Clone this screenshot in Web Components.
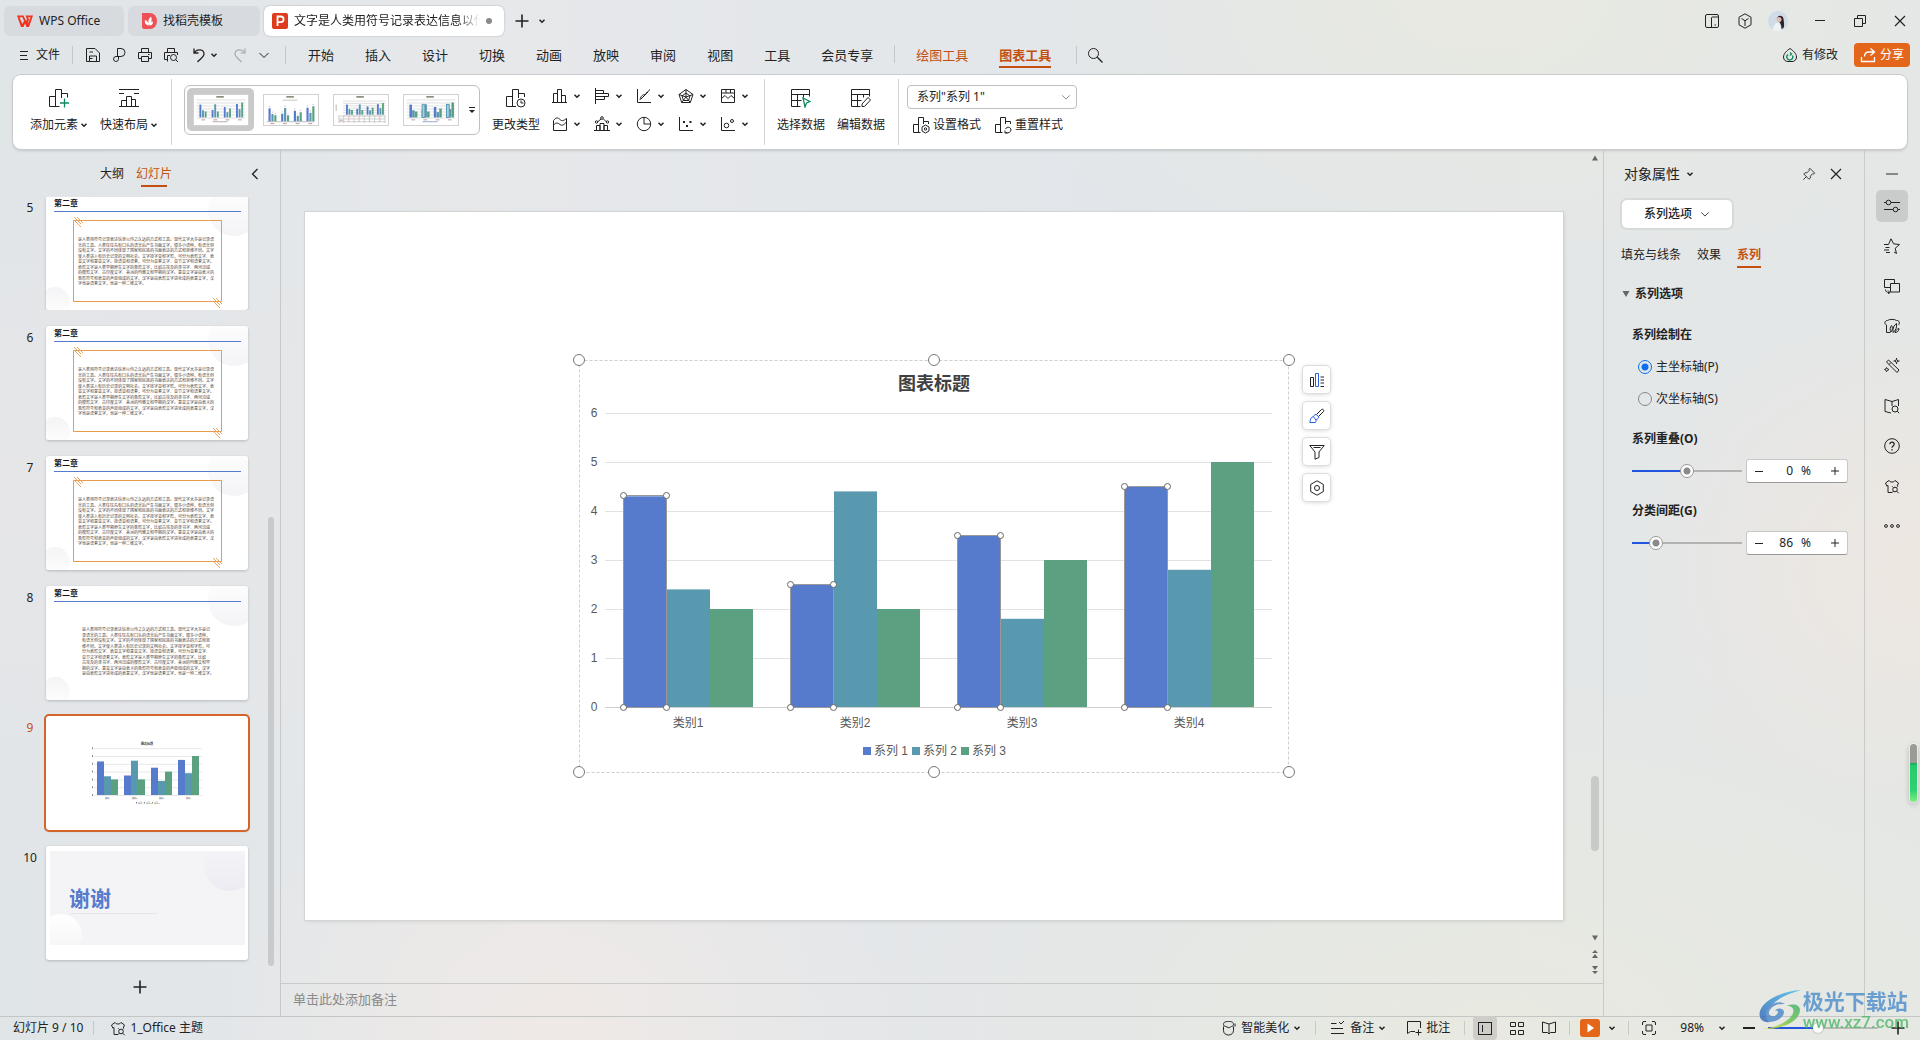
<!DOCTYPE html>
<html lang="zh-CN">
<head>
<meta charset="utf-8">
<title>WPS Office</title>
<style>
html,body{margin:0;height:100%}
body{font:12px/16px "Noto Sans","Noto Sans CJK SC",sans-serif;color:#222;overflow:hidden}
</style>
</head>
<body>
<wps-app></wps-app>
<script>
const BASE = `*{box-sizing:border-box}
button,input,select{font:inherit;color:inherit;margin:0}
button{background:none;border:0;padding:0;display:flex;align-items:center;cursor:pointer;white-space:nowrap}
a{color:inherit;text-decoration:none;white-space:nowrap}
svg{display:block}`;

const define = (tag, css, render) => customElements.define(tag, class extends HTMLElement {
  connectedCallback() {
    if (this.shadowRoot) return;
    this.attachShadow({ mode: 'open' }).innerHTML = `<style>${BASE}${css}</style>${render(this)}`;
  }
});

const BARS20 = 'M.5 18.5v-10h6M.5 18.5h6.5M6.5 18.5V1.5h6V10';
const SHIRT = 'M5 2.5 1.5 5l1.3 3L4 7.500V14.500h4M5 2.500c1 2 5 2 6 0l3.500 2.500-1.300 3';
/* name: [view box side, markup] */
const ICONS = {
  caret: [8, '<path d="M1.500 2.800 4 5.200 6.500 2.800" stroke-width="1.500"/>'],
  chevron: [12, '<path d="M1.500 4 6 8.500 10.500 4"/>'],
  back: [12, '<path d="M8.500 1 3.500 6l5 5" stroke-width="1.300"/>'],
  plus: [14, '<path d="M7 .5v13M.5 7h13" stroke-width="1.600"/>'],
  plusS: [10, '<path d="M5 1v8M1 5h8"/>'],
  minus: [12, '<path d="M0 6h12" stroke-width="2"/>'],
  minusS: [10, '<path d="M1 5.500h8"/>'],
  close: [12, '<path d="m1 1 10 10M11 1 1 11" stroke-width="1.200"/>'],
  menu: [10, '<path d="M1 1.500h8M1 5.500h7M1 9.500h8"/>'],
  save: [16, '<path d="M1.500 1.500h8.500l4.500 4.500v8.500h-13zM4.500 14.500V9h7v5.500M4.500 5H8M4.500 11.500h3"/>'],
  export: [16, '<path d="M6.500 9.500V1.500h3.500a4 4 0 0 1 0 8H5a2.500 2.500 0 1 0 2.500 3V9.500" /><path d="M6.500 4v5.500"/>'],
  print: [16, '<path d="M4.500 5V1.500h7V5M4 11.500H1.500v-6h13v6H12M4.500 9.500h7v5h-7zM11 7.500h1.500"/>'],
  preview: [16, '<path d="M4.500 5V1.500h7V5M4 12.500H1.500v-7h13V8M4.500 14.500v-6H7"/><circle cx="10.500" cy="10.500" r="3"/><path d="m12.800 12.800 2.200 2.200"/>'],
  undo: [16, '<path d="M3 1.500v4.500h4.500M3.500 5.500C6 1.500 13 2 13 7c0 3-4 5-6.500 8" stroke-width="1.300"/>'],
  redo: [16, '<path d="M13 1.500v4.500H8.500M12.500 5.500C10 1.500 3 2 3 7c0 3 4 5 6.500 8" stroke-width="1.200"/>'],
  search: [16, '<circle cx="6.500" cy="6.500" r="5"/><path d="m10.300 10.300 5.200 5.200" stroke-width="1.300"/>'],
  panels: [16, '<rect x="1.500" y="1.500" width="13" height="13" rx="1.500"/><path d="M7.500 14.500V5a1 1 0 0 1 1-1h6M10.500 12h1.500" />'],
  cube: [16, '<path d="M8 .8 14 4.200v7.600L8 15.200 2 11.800V4.200zM4.500 5.500 8 7.700l3.500-2.200M8 7.700V13"/>'],
  restore: [12, '<path d="M3.500 3.500V.5h8v8h-3M.5 3.500h8v8h-8z"/>'],
  min: [12, '<path d="M1 5.500h10"/>'],
  cloud: [16, '<path d="M8 1.500c3 2 6.500 5 6.500 8.500 0 3-2 4.500-4.500 4.500H6C3.500 14.500 1.500 13 1.500 10 1.500 6.500 5 3.500 8 1.500z"/><path d="M6 7.500a3 3 0 1 0 4.500 1M8 5.500l1.500 1.500L8 8.500" stroke="#0f8a60" stroke-width="1.300"/>'],
  share: [16, '<path d="M10.500 1.500 14.500 5l-4 3.500M14 5H9C6 5 4.500 7 4.500 9.500M1.500 10v4.500h13V10" stroke-width="1.300"/>'],
  addel: [20, `<path d="${BARS20}M12.500 5.500h6v4M6.500 18.500h4"/><path d="M15.500 10.500v9M11 15h9" stroke="#0f8a60" stroke-width="1.300"/>`],
  layout: [20, '<path d="M0 1.500h20M0 5.500h5M15 5.500h5M2.500 18.500v-6h5M7.500 18.500V8.500h5v10M12.500 11.500h4v7M0 18.500h20"/>'],
  chtype: [20, `<path d="${BARS20}M12.500 5.500h6V9M6.500 18.500H10"/><circle cx="15" cy="15" r="4"/><path d="M15 12.500V15h2.500"/>`],
  bars: [16, '<path d="M1.500 14.500v-9h4v9zM5.500 14.500v-13h4v13zM9.500 14.500v-7h4v7zM0 14.500h15"/>'],
  hbars: [16, '<path d="M1.500 0v16M1.500 2.500h8v3M1.500 5.500h13v3h-13M1.500 8.500h9v3h-9"/>'],
  line: [16, '<path d="M1.500 1v13.500H15M4 12c1-5 3-5 4.500-5.500S11 4 14 1.500M5 11l7-7"/>'],
  radar: [16, '<path d="m8 1.500 7 5-2.700 8H3.700L1 6.500zM8 1.500V9M1 6.500 8 9l7-2.500M3.700 14.500 8 9l4.300 5.500M8 5l4 3-1.500 4.500h-5L4 8z"/>'],
  treemap: [16, '<path d="M1.500 1.500h13v13h-13zM1.500 5h13M6 1.500V5M10.500 1.500V5M1.500 10.500 5 7.500l3 3 3-3 3.500 3"/>'],
  area: [16, '<path d="M1.500 14.500V4.500C4 1 6 1.500 8 3.500s4 1 6.500-1v12zM1.500 9C4 6 6 7 8 8.500S12 9 14.500 6"/>'],
  combo: [16, '<path d="M2.500 14.500v-5h3.500v5M6 14.500v-7h4v7M10 14.500v-5h3.500v5M0 14.500h16M3.500 6 7 3M9.500 3l3 3"/><circle cx="2.500" cy="6" r="1.200"/><circle cx="8" cy="2" r="1.300"/><circle cx="13.500" cy="6" r="1.200"/>'],
  pie: [16, '<circle cx="8" cy="8" r="6.700"/><path d="M8 1.500V8h6.500"/>'],
  scatter: [16, '<path d="M1.500 1v13.500H15"/><path d="M5 5h2v2H5zM8 9h2v2H8zM11.500 5h2v2h-2z" fill="currentColor" stroke="none"/>'],
  bubble: [16, '<path d="M1.500 1v13.500H15"/><circle cx="6.500" cy="9.500" r="2.300"/><circle cx="12" cy="5" r="1.500"/>'],
  seldata: [20, '<path d="M.5 1.500h18v7M.5 1.500v17h9M.5 6.500h18M.5 12.500h10M6.500 6.500v12M12.500 6.500v3"/><path d="m12 10 7 3.500-3.500 1.500-1.500 4z" stroke="#0f8a60" stroke-width="1.300"/>'],
  editdata: [20, '<path d="M.5 1.500h18v7M.5 1.500v17h9M.5 6.500h18M.5 12.500h10M6.500 6.500v12M12.500 6.500v3M17 9.500l2.500 2.500-6 6.500H11V16z"/>'],
  format: [18, '<path d="M.5 16.500v-8h5M5.500 16.500v-15h5V8M10.500 5.500h5V8M.5 16.500h7"/><path d="m12.500 9 3.500 2v4l-3.500 2L9 15v-4z"/><circle cx="12.500" cy="13" r="1.200"/>'],
  reset: [18, '<path d="M.5 16.500v-8h5M5.500 16.500v-15h5V8M10.500 5.500h5V8M.5 16.500h7M10 14.500V17h2.500M10.500 16.500c3 1 5.500-.5 5.500-2.500 0-3-4-4-5.500-1"/>'],
  pin: [16, '<path d="m9 1.500 5.500 5.500-1.500 1-1-.2-2.500 2.700.2 2L8 14 2 8l1.500-1.500 2 .2L8.200 4 8 2.500zM5 11l-3.500 3.500"/>'],
  sliders: [16, '<path d="M0 4.500h2M7 4.500h9M0 11.500h9M14 11.500h2"/><circle cx="4.500" cy="4.500" r="2.300"/><circle cx="11.500" cy="11.500" r="2.300"/>'],
  star: [16, '<path d="M0 6.500h4.500L7 .8l2.500 5 6 .7-4.300 3.800 1.300 5.200-2.500-1.500M1.500 9.500h4M0 12h5M2 14.500h4"/>'],
  copyshape: [16, '<path d="M6 9.500H.5v-8h10v4M6.500 5.500h9v8.500h-9zM1.500 11.500c0 2 1 3 4 3M4 12.500l2 2-2 1.500"/>'],
  leaf: [16, '<path d="M2.500 7C0 6 .5 2.500 3.500 2.500 5 1 11 1 12.500 2.500c3-.5 3.500 3 2 4.500M2.500 7v7.500h4M7 14c-1.500-2-1-5 .5-6.500C9 9 8.500 12 7 14zM9 14.500C8.500 10 10 7 12.500 5.500c.5 3.500-.5 7-3.500 9zM11 14.500c.5-2 2-3.500 4-4-.2 2.500-1.500 4-4 4z"/>'],
  wand: [16, '<path d="m2.500 4 2-2 10.500 10-2 2.500zM5 6.500l2-2"/><circle cx="12.500" cy="3" r="1.300"/><path d="M12.500 0v1.500M12.500 4.500V6M9.500 3H11M14 3h1.500M2.500 9.500l1 1.500 1.500.5-1.500.7-1 1.500-.7-1.500-1.300-.7 1.300-.5z"/>'],
  booksearch: [16, '<path d="M8 3.500 1 1.500v12l6 1.500M8 3.500l6.500-2V8M8 3.500V8"/><circle cx="11" cy="11" r="3"/><path d="m13.200 13.200 2 2"/>'],
  help: [16, '<circle cx="8" cy="8" r="7.300"/><path d="M5.800 6.300c0-3 4.400-3 4.400 0C10.200 8 8 8 8 9.800M8 11v1.500" stroke-width="1.200"/>'],
  shirt: [16, `<path d="${SHIRT}"/><circle cx="11" cy="11.500" r="2.300"/><path d="M9.300 9.500 8.200 8.300M12.700 9.500l1.100-1.200M12.700 13.200l2 2M9.300 13.200l-1 1.300"/>`],
  dots: [16, '<circle cx="2" cy="8" r="1.400"/><circle cx="8" cy="8" r="1.400"/><circle cx="14" cy="8" r="1.400"/>'],
  smart: [16, '<path d="M2.500 6.500v4c0 6 10 6 10 0v-4M2.500 4.500c0-3 3-3 5-3s5 0 5 3c0 2-2 1.500-3 2.500s-2 1-3.500 0-3.500-.5-3.500-2.500zM14 3.500v3"/>'],
  notes: [16, '<path d="M1 3.500h5.500M1 8.500h12M1 13.500h13M9 2l2 2 3-3"/>'],
  comment: [16, '<path d="M14.500 8V1.500h-13v12l3-2h4.500M12.500 9.500v6M9.500 12.500h6"/>'],
  normal: [16, '<rect x="1.500" y="2.500" width="13" height="12"/><path d="M5.500 5v7"/>'],
  grid: [16, '<path d="M1.500 2.500h5v4h-5zM9.500 2.500h5v4h-5zM1.500 10.500h5v4h-5zM9.500 10.500h5v4h-5z"/>'],
  book: [16, '<path d="M8 4 1.500 2v10.500h5L8 14l1.500-1.500h5V2zM8 4v10"/>'],
  fit: [16, '<path d="M1.500 5V3a1.500 1.500 0 0 1 1.500-1.500h2M11 1.500h2A1.500 1.500 0 0 1 14.500 3v2M14.500 11v2a1.500 1.500 0 0 1-1.500 1.500h-2M5 14.500H3A1.500 1.500 0 0 1 1.500 13v-2M5 5h6v6H5z"/>'],
  elements: [16, '<path d="M1.500 14.500v-9h3v9zM11.500 5H15M11.500 8H15M11.500 11H15M11.500 14.500H15"/><path d="M6.500 14.500v-13h3v13z" stroke="#2b5fe0"/>'],
  brush: [16, '<path d="m7.500 6.500 5-5c1-1 3 .5 2 2l-5 5"/><path d="M7 6.500 10 9c-1 2-2.500 3-4 2.500M7 6.500C5 6.500 5 8 4.500 8.500 1.500 9 1.500 12 .8 14.500h5.700C7.500 13 7 12 6.500 11.500L4.500 8.500" stroke="#2b5fe0"/>'],
  funnel: [16, '<path d="M.8 1.500h14.400L10 8v5.500L6 15.200V8zM4.500 3.500h7"/>'],
  hex: [16, '<path d="m8 .8 6.300 3.600v7.200L8 15.200l-6.300-3.600V4.400z"/><circle cx="8" cy="8" r="2.500"/>'],
  wps: [16, '<path d="M0 2.500h6.500L9 8l1-2-1.500-3.500H16L12 14H9.500L8 10.500 6.500 14H4zM2.500 4.200 5.300 11l1.700-3-1.500-3.800zM11 4.200l1 2L10.500 11l.5-.500L13.500 4.200z" fill="#f0321e" fill-rule="evenodd" stroke="none"/>'],
  docer: [16, '<path d="M1 0h8a7 8 0 0 1 0 16H2.500L1 14.500z" fill="#ef5055" stroke="none"/><path d="M8 12.500C4 12 3.500 9.500 4 7c2 .5 3.500 2 4 5.500zM8 12c-1.500-4 0-7 2-8.500 1.500 3 .5 6-2 8.500zM8.500 12.500c0-2 1-3.500 3.500-4 0 2.500-1 4-3.500 4z" fill="#fff" stroke="none"/>'],
  ppt: [16, '<rect width="16" height="16" rx="2" fill="#dd3a1e" stroke="none"/><path d="M5.500 13V3.500h3.300a2.800 2.800 0 0 1 0 5.600H5.500" stroke="#fff" stroke-width="1.800"/>'],
  avatar: [20, '<circle cx="10" cy="10" r="10" fill="#cfdbe6" stroke="none"/><path d="M9 8c0-4 6-4.500 6.500 0 .5 4 1 6 0 9l-2 1c0-4-1-5-2-7z" fill="#2b2226" stroke="none"/><circle cx="11" cy="8.500" r="2.500" fill="#e0bfae" stroke="none"/><path d="M5 19c0-4 2-7 5-7.500 2 1 3 4 3 8-3 1-6 .5-8-.5z" fill="#eef2f6" stroke="none"/>'],
  play: [16, '<path d="M5.500 3.500 12 8l-6.500 4.500z" fill="#fff" stroke="none"/>'],
  up: [10, '<path d="m5 2.500 3 5H2z" fill="#666" stroke="none"/>'],
  down: [10, '<path d="m5 7.500 3-5H2z" fill="#666" stroke="none"/>'],
  fold: [10, '<path d="m5 8 3.500-6h-7z" fill="#666" stroke="none"/>'],
  up2: [10, '<path d="m5 1 3 3H2zM5 5l3 4H2z" fill="#666" stroke="none"/>'],
  down2: [10, '<path d="m5 9 3-3H2zM5 5l3-4H2z" fill="#666" stroke="none"/>'],
  more: [8, '<path d="M1 1.500h6"/><path d="M1 4h6L4 7z" fill="currentColor" stroke="none"/>']
};
define('wps-icon', ':host{display:inline-block;flex:none}', el => {
  const [side, body] = ICONS[el.getAttribute('name')];
  const size = el.getAttribute('size') || side;
  return `<svg width="${size}" height="${size}" viewBox="0 0 ${side} ${side}" fill="none" stroke="currentColor" aria-hidden="true">${body}</svg>`;
});
const icon = (name, size) => `<wps-icon name="${name}"${size ? ` size="${size}"` : ''}></wps-icon>`;

define('v-sep', ':host{display:block;width:1px;height:16px;background:#c4c7c9;flex:none}', () => '');

/* ---------- title bar ---------- */
define('doc-tab', `:host{display:block;width:var(--w);flex:none}
button{width:100%;height:30px;border-radius:6px;background:#d7dade;padding:0 11px 0 13px;gap:6px}
:host([active]) button{background:#fff;padding:0 12px 0 8px;box-shadow:0 0 2px #0004}
.t{flex:1;overflow:hidden;text-align:left}
:host([active]) .t{-webkit-mask:linear-gradient(90deg,#000 88%,transparent)}
.dot{width:6px;height:6px;border-radius:50%;background:#8a8a8a;flex:none}`,
  el => `<button>${icon(el.getAttribute('icon'))}<span class="t"><slot></slot></span>${el.hasAttribute('active') ? '<i class="dot"></i>' : ''}</button>`);

define('title-bar', `:host{display:flex;align-items:center;height:40px;padding:2px 0 0 4px;gap:4px}
.new{display:flex;gap:9px;align-items:center;padding-left:7px}
.win,.apps{display:flex;align-items:center}.win{margin-left:auto}.apps{padding-right:6px}
.win button{width:40px;justify-content:center}.apps button{width:33px}`,
  () => `<doc-tab icon="wps" style="--w:120px">WPS Office</doc-tab>
<doc-tab icon="docer" style="--w:132px">找稻壳模板</doc-tab>
<doc-tab icon="ppt" active style="--w:240px">文字是人类用符号记录表达信息以传之久远</doc-tab>
<div class="new"><button aria-label="新建">${icon('plus')}</button><button aria-label="标签列表">${icon('caret')}</button></div>
<div class="win"><div class="apps"><button aria-label="面板">${icon('panels')}</button><button aria-label="应用">${icon('cube')}</button><button aria-label="账户">${icon('avatar')}</button></div>
<button aria-label="最小化">${icon('min')}</button><button aria-label="还原">${icon('restore')}</button><button aria-label="关闭">${icon('close')}</button></div>`);

/* ---------- menu row ---------- */
define('menu-bar', `:host{display:flex;align-items:center;height:30px;padding:0 10px 0 19px}
.file{gap:7px}.quick{display:flex;align-items:center;gap:10px;margin:0 15px 0 12px}
v-sep{height:18px}.file+v-sep{margin-left:12px}
.undo{display:flex;gap:3px;padding:0 4px 0 2px}.undo+button{color:#aaa}
nav{display:flex;gap:31px;padding-left:22px;font-size:13px;line-height:18px}
nav v-sep{margin:2px -10px 0}
nav a{padding:3px 0 2px;border-bottom:2px solid transparent}
nav .o{color:#c3500f}nav .on{font-weight:700;border-color:#c3500f}
.find{padding-left:10px}nav+v-sep{margin-left:25px}
.end{margin-left:auto;display:flex;align-items:center;gap:16px}
.end button{gap:4px}.share{background:#e4661a;color:#fff;height:24px;padding:0 6px;border-radius:4px}`,
  () => `<button class="file">${icon('menu')}文件</button><v-sep></v-sep>
<div class="quick">${['save', 'export', 'print', 'preview'].map(n => `<button aria-label="${n}">${icon(n)}</button>`).join('')}
<span class="undo"><button aria-label="撤销">${icon('undo')}</button><button aria-label="撤销列表">${icon('caret')}</button></span>
<button aria-label="恢复">${icon('redo')}</button><button aria-label="更多">${icon('chevron')}</button></div><v-sep></v-sep>
<nav>${['开始', '插入', '设计', '切换', '动画', '放映', '审阅', '视图', '工具', '会员专享'].map(t => `<a href="#">${t}</a>`).join('')}<v-sep></v-sep><a href="#" class="o">绘图工具</a><a href="#" class="o on">图表工具</a></nav>
<v-sep></v-sep><button class="find" aria-label="搜索">${icon('search')}</button>
<div class="end"><button>${icon('cloud')}有修改</button><button class="share">${icon('share')}分享</button></div>`);

/* ---------- chart data and drawings ---------- */
const DATA = [[4.3, 2.4, 2], [2.5, 4.4, 2], [3.5, 1.8, 3], [4.5, 2.8, 5]];
const COLORS = ['#567bcd', '#5899b0', '#5ba181'];
const miniBars = (x, base, pitch, w, gap, unit) => DATA.map((g, i) => g.map((v, j) =>
  `<rect x="${x + i * pitch + j * (w + gap)}" y="${base - v * unit}" width="${w}" height="${v * unit}" fill="${COLORS[j]}"/>`).join('')).join('');

define('chart-style', `:host{display:block}
button{width:67px;height:43px;border-radius:5px;justify-content:center}
:host([active]) button{background:#cacaca}
svg{background:#fff;border:1px solid #d2d2d2}`, el => {
  const k = +el.getAttribute('variant');
  const [x, base, pitch, w, gap, unit] = [[5, 24, 13, 2, .8, 3.2], [4, 28, 13.5, 2.3, .8, 3.2], [12, 21, 11, 2, .7, 2.5], [5, 24, 13, 2.7, .2, 3.2]][k];
  const lines = k === 1 ? `<path d="M2 ${base}.500h51" stroke="#bbb"/>` : [0, 1, 2, 3, 4, 5, 6].map(i => `<path d="M${x - 3} ${base - i * unit + .5}H54" stroke="#ddd"/>`).join('');
  const marks = k === 1 ? DATA.map((g, i) => g.map((v, j) => `<path d="M${x + .6 + i * pitch + j * 3.100} ${base - v * unit - 2}h1" stroke="#d79a9a"/>`).join('')).join('') : '';
  const labels = k === 2 ? '' : DATA.map((_, i) => `<path d="M${x + 2 + i * pitch} ${base + 2.5}h4" stroke="#b99"/>`).join('');
  const extra = ['<path d="M19 28.500h16" stroke="#b3a9b0"/>', '<path d="M19 5.500h16" stroke="#c9bfc4"/>',
    '<path d="M4 22.500h50M4 25.500h50M4 28.500h50M4.500 22v8M9.500 22v8M20.500 22v8M31.500 22v8M42.500 22v8M53.500 22v8" stroke="#ccc"/><path d="M1.500 10v7M5 27h4" stroke="#b9b2a8"/><path d="M15 22v7M26 22v7M37 22v7M48 22v7" stroke="#e0b4b4"/>',
    '<path d="M19 28.500h16" stroke="#8fa3cf"/><path d="M18.500 10h3v14h-3zM44.500 10h3v14h-3z" fill="#a9cdd8" stroke="#5899b0"/>'][k];
  return `<button aria-label="图表样式${k + 1}"><svg width="56" height="32" viewBox="0 0 56 32">
<path d="M23 2h8" stroke="#776" stroke-width="1.500"/>${lines}${miniBars(x, base, pitch, w, gap, unit)}${marks}${labels}${extra}</svg></button>`;
});

/* ---------- ribbon ---------- */
define('tool-button', `:host{display:block}
button{flex-direction:column;gap:9px}span{display:flex;align-items:center;gap:2px}`,
  el => `<button>${icon(el.getAttribute('icon'))}<span><slot></slot>${el.hasAttribute('caret') ? icon('caret') : ''}</span></button>`);

define('rib-bon', `:host{display:flex;height:74px;margin:5px 13px 0;background:#fff;border-radius:8px;box-shadow:0 0 0 1px #c9cbcc,0 2px 3px #0002;padding:4px 0 4px 5px}
.g{display:flex;padding:9px 13px 0 12px;gap:12px;border-right:1px solid #d4d4d4}
.g:last-child{border:0;padding:6px 0 0 8px;flex-direction:column;gap:7px}
.gal{display:flex;gap:3px;height:50px;border:1px solid #bdbfc1;border-radius:6px;padding:2px;margin-top:-3px}
.gal>button{width:10px;justify-content:center}
.kinds{display:grid;grid-template-columns:repeat(5,29px);gap:12px 13px;height:44px;width:199px}
.kinds button{gap:5px}
.pick{position:relative;width:170px}
.pick wps-icon{position:absolute;right:6px;top:7px;color:#777;pointer-events:none}
select{appearance:none;width:100%;height:24px;border:1px solid #bdbfc1;border-radius:4px;background:#fff;padding:0 9px}
.two{display:flex;gap:14px;padding-left:6px}.two button{gap:2px}`,
  () => `<div class="g"><tool-button icon="addel" caret>添加元素</tool-button><tool-button icon="layout" caret>快速布局</tool-button></div>
<div class="g"><div class="gal">${[0, 1, 2, 3].map(i => `<chart-style variant="${i}"${i ? '' : ' active'}></chart-style>`).join('')}<button aria-label="更多样式">${icon('more')}</button></div>
<tool-button icon="chtype">更改类型</tool-button>
<div class="kinds">${['bars', 'hbars', 'line', 'radar', 'treemap', 'area', 'combo', 'pie', 'scatter', 'bubble'].map(n => `<button aria-label="${n}">${icon(n)}${icon('caret')}</button>`).join('')}</div></div>
<div class="g"><tool-button icon="seldata">选择数据</tool-button><tool-button icon="editdata">编辑数据</tool-button></div>
<div class="g"><div class="pick"><select aria-label="图表元素"><option>系列"系列 1"</option></select>${icon('chevron', 10)}</div>
<div class="two"><button>${icon('format')}设置格式</button><button>${icon('reset')}重置样式</button></div></div>`);

/* ---------- slide list ---------- */
const TEXT_A = ['是人类用符号记录表达信息以传之久远的方式和工具。现代文字大多是记录语', '言的工具。人类往往先有口头的语言后产生书面文字，很多小语种，有语言但', '没有文字。文字的不同体现了国家和民族的书面表达的方式和思维不同。文字', '使人类进入有历史记录的文明社会。文字按字音和字形，可分为表形文字、表', '音文字和意音文字。按语音和语素，可分为音素文字、音节文字和语素文字。', '表形文字是人类早期原生文字的象形文字，比如古埃及的圣书字、两河流域', '的楔形文字、古印度文字、美洲的玛雅文和早期的汉字。意音文字是由表义的', '象形符号和表音的声旁组成的文字，汉字是由表形文字进化成的表意文字，汉', '字也是语素文字，也是一种二维文字。'];
const TEXT_B = ['是人类用符号记录表达信息以传之久远的方式和工具。现代文字大多是记', '录语言的工具。人类往往先有口头的语言后产生书面文字，很多小语种，', '有语言但没有文字。文字的不同体现了国家和民族的书面表达的方式和思', '维不同。文字使人类进入有历史记录的文明社会。文字按字音和字形，可', '分为表形文字、表音文字和意音文字。按语音和语素，可分为音素文字、', '音节文字和语素文字。表形文字是人类早期原生文字的象形文字，比如', '古埃及的圣书字、两河流域的楔形文字、古印度文字、美洲的玛雅文和早', '期的汉字。意音文字是由表义的象形符号和表音的声旁组成的文字，汉字', '是由表形文字进化成的表意文字，汉字也是语素文字，也是一种二维文字。'];
const para = (lines, x, y) => `<g font-size="4" fill="#444">${lines.map((t, i) => `<text x="${x}" y="${y + i * 5.5}">${t}</text>`).join('')}</g>`;
const hatch = (x, y) => `<path d="m${x} ${y} 7 7m-4-7 6 6m-8-2 6 6" stroke="#eba45e"/>`;
const shell = `<defs><linearGradient id="f" x2="0" y2="1"><stop stop-color="#fff"/><stop offset="1" stop-color="#f4f4f7"/></linearGradient><linearGradient id="h" x2="0" y2="1"><stop stop-color="#f4f4f6"/><stop offset="1" stop-color="#fff"/></linearGradient></defs>
<circle cx="188" cy="14" r="26" fill="url(#f)"/><circle cx="9" cy="106" r="15" fill="url(#h)"/>
<text x="8" y="10" font-size="8" font-weight="700" fill="#111">第二章</text><path d="M8 15.500h187" stroke="#567bcd"/>`;
const SLIDES = {
  framed: shell + '<path d="M27.500 24.500h148v81h-148z" stroke="#ea9a4c" fill="none"/>' + hatch(28, 21) + hatch(167, 102) + para(TEXT_A, 32, 45),
  plain: shell + para(TEXT_B, 36, 45),
  chart: `<text x="101" y="29" font-size="3" font-weight="700" text-anchor="middle" fill="#333">图表标题</text>
${[0, 1, 2, 3, 4, 5, 6].map(i => `<path d="M48 ${79.500 - i * 7.800}h108" stroke="#e8e8e8"/><path d="M46 ${79 - i * 7.800}h1" stroke="#888" stroke-width="2"/>`).join('')}
${miniBars(51, 79, 27, 7, 0, 7.800)}${[1, 2, 3, 4].map(i => `<text x="${34.500 + i * 27}" y="83" font-size="2" text-anchor="middle" fill="#444">类别${i}</text>`).join('')}
<g font-size="2" fill="#555">${[0, 1, 2].map(i => `<path d="M${90 + i * 8} 86h1v1.500h-1z" fill="${COLORS[i]}"/><text x="${92 + i * 8}" y="88">系列 ${i + 1}</text>`).join('')}</g>`,
  thanks: `<defs><linearGradient id="f" x2="0" y2="1"><stop stop-color="#f7f7f9"/><stop offset="1" stop-color="#ebebf2"/></linearGradient><linearGradient id="h" x2="0" y2="1"><stop stop-color="#fff"/><stop offset="1" stop-color="#f4f4f6"/></linearGradient><clipPath id="c"><path d="M4 5h195v94H4z"/></clipPath></defs>
<path d="M4 5h195v94H4z" fill="#f4f4f6"/><g clip-path="url(#c)"><circle cx="184" cy="19" r="26" fill="url(#f)"/><circle cx="15" cy="89" r="21" fill="url(#h)"/></g><path d="M24 67.500h87" stroke="#e4e4ea"/>
<text x="23" y="60" font-size="21" font-weight="700" fill="#567bcd">谢谢</text>`
};
define('slide-thumb', `:host{display:flex;gap:9px;align-items:flex-start}
b{font-weight:400;width:37px;text-align:right;padding:4px 0 0;flex:none}
button{width:202px;height:114px;background:#fff;border-radius:3px;box-shadow:0 1px 3px #0003;overflow:hidden}
:host([active]) button{outline:2px solid #d4652a}
:host([active]) b{color:#c3500f}b span{display:inline-block;width:14px;text-align:center}`,
  el => `<b><span>${el.getAttribute('no')}</span></b><button aria-label="幻灯片 ${el.getAttribute('no')}"><svg width="202" height="114" viewBox="0 0 202 114" fill="none" font-family="inherit">${SLIDES[el.getAttribute('kind')]}</svg></button>`);

define('slide-panel', `:host{display:flex;flex-direction:column;min-height:0;border-right:1px solid #c6c9cb;padding-top:15px}
.top{display:flex;gap:12px;padding:0 19px 0 100px;height:32px;flex:none}
.top a{height:22px;padding-top:1px}.on{color:#c3500f;display:flex;flex-direction:column;align-items:center}
.on::after{content:"";width:26px;height:2px;margin-top:3px;background:#c3500f;flex:none}
.top button{margin-left:auto;height:18px}
.body{flex:1;min-height:0;display:flex;overflow:hidden}
.list{flex:1;display:flex;flex-direction:column;gap:16px}
.clip{overflow:hidden;height:113px;display:flex;align-items:flex-end;flex:none}
.clip slide-thumb{flex:none}
.bar{width:6px;margin:320px 6px 50px 0;border-radius:3px;background:#c8cacb}
.add{align-self:center;padding:4px 0 0 12px}`,
  () => `<div class="top"><a href="#">大纲</a><a href="#" class="on">幻灯片</a><button aria-label="收起">${icon('back')}</button></div>
<div class="body"><div class="list"><div class="clip"><slide-thumb no="5" kind="framed"></slide-thumb></div>
<slide-thumb no="6" kind="framed"></slide-thumb><slide-thumb no="7" kind="framed"></slide-thumb><slide-thumb no="8" kind="plain"></slide-thumb><slide-thumb no="9" kind="chart" active></slide-thumb><slide-thumb no="10" kind="thanks"></slide-thumb>
<button class="add" aria-label="新建幻灯片">${icon('plus')}</button></div><div class="bar"></div></div>`);

/* ---------- chart object on the slide ---------- */
define('bar-chart', ':host{display:block;width:710px;height:412px}svg{overflow:visible;font:12px "Liberation Sans","Noto Sans CJK SC",sans-serif}', () => {
  const Y = v => 347 - v * 49, X = i => 45 + i * 167;
  let s = '';
  for (let v = 0; v <= 6; v++) s += `<path d="M26 ${Y(v) + .5}h667" stroke="${v ? '#e2e2e2' : '#d0d0d0'}"/><text x="15" y="${Y(v) + 4}" text-anchor="middle">${v}</text>`;
  DATA.forEach((g, i) => {
    g.forEach((v, j) => s += `<rect x="${X(i) + j * 43}" y="${Y(v)}" width="43" height="${v * 49}" fill="${COLORS[j]}"/>`);
    s += `<text x="${X(i) + 64}" y="367" text-anchor="middle">类别${i + 1}</text>`;
  });
  DATA.forEach((g, i) => {
    const t = Math.round(Y(g[0])) - .5, x = X(i) + .5;
    s += `<rect x="${x - 1}" y="${t}" width="43" height="${347.5 - t}" fill="none" stroke="#999"/>`;
    for (const [cx, cy] of [[x - 1, t], [x + 42, t], [x - 1, 347.5], [x + 42, 347.5]]) s += `<circle cx="${cx}" cy="${cy}" r="3" fill="#fff" stroke="#666"/>`;
  });
  COLORS.forEach((c, i) => s += `<rect x="${284 + i * 49}" y="387" width="8" height="8" fill="${c}"/><text x="${295 + i * 49}" y="395">系列 ${i + 1}</text>`);
  const frame = '<path d="M.5.500h709v412H.5z" fill="none" stroke="#ccced2" stroke-dasharray="3 2"/>' +
    [0, 355, 710].map(x => [0, 412].map(y => `<circle cx="${x}" cy="${y}" r="5.500" fill="#fff" stroke="#777"/>`).join('')).join('');
  return `<svg width="710" height="412" viewBox="0 0 710 412" fill="#595959">${frame}<text x="355" y="30" text-anchor="middle" font-size="18" font-weight="700" fill="#404040">图表标题</text>${s}</svg>`;
});
define('chart-actions', `:host{display:flex;flex-direction:column;gap:9px}
button{width:27px;height:27px;border-radius:4px;background:#fff;justify-content:center;box-shadow:0 0 0 1px #ddd,0 1px 5px #0003}`,
  () => [['elements', '图表元素'], ['brush', '图表样式'], ['funnel', '图表筛选器'], ['hex', '设置图表']].map(([n, t]) => `<button aria-label="${t}">${icon(n)}</button>`).join(''));

define('work-space', `:host{display:flex;flex-direction:column;min-width:0}
.stage{flex:1;display:flex;border-bottom:1px solid #c9cbc9}
.slide{flex:1;margin:62px 24px 63px;background:#fff;box-shadow:0 0 0 1px #d3d4d4,1px 1px 4px #0002;display:flex;align-items:center;justify-content:center}
.obj{position:relative}.obj chart-actions{position:absolute;left:724px;top:6px}
.scroll{width:16px;display:flex;flex-direction:column;align-items:center;padding:3px 0 8px;gap:6px}
.thumb{width:8px;height:75px;border-radius:4px;background:#c8cac7;margin:auto 0 76px}
.notes{height:32px;padding:0 12px 3px;border:0;background:none;outline:0;font-size:13px;width:100%}
.notes::placeholder{color:#8a8a8a}`,
  () => `<div class="stage"><div class="slide"><div class="obj"><bar-chart></bar-chart><chart-actions></chart-actions></div></div>
<div class="scroll">${icon('up')}<i class="thumb"></i>${icon('down')}${icon('up2')}${icon('down2')}</div></div>
<input class="notes" aria-label="备注" placeholder="单击此处添加备注">`);

/* ---------- property pane ---------- */
define('percent-field', `:host{display:block}
label{font-weight:700;display:block}
.row{display:flex;align-items:center;gap:4px;margin-top:12px}
input[type=range]{appearance:none;width:110px;height:16px;background:linear-gradient(90deg,#2155e0 var(--p),#b3b3b3 var(--p)) center/100% 2px no-repeat}
input::-webkit-slider-thumb{appearance:none;width:14px;height:14px;border-radius:50%;border:1px solid #999;background:radial-gradient(#8a8a8a 3px,#fff 4px)}
.num{display:flex;align-items:center;width:102px;height:24px;background:#fff;border:1px solid #c9c9c9;border-bottom-color:#999;border-radius:3px;padding:0 7px}
.num input{width:38px;border:0;padding:0;background:none;text-align:right;flex:1;min-width:0}
.num span{padding:0 19px 0 8px}`,
  el => {
    const [v, min, max] = ['value', 'min', 'max'].map(a => +el.getAttribute(a));
    return `<label for="r"><slot></slot></label><div class="row"><input id="r" type="range" min="${min}" max="${max}" value="${v}" style="--p:${(v - min) / (max - min) * 100}%">
<div class="num"><button aria-label="减少">${icon('minusS')}</button><input type="text" value="${v}" aria-label="百分比"><span>%</span><button aria-label="增加">${icon('plusS')}</button></div></div>`;
  });

define('prop-pane', `:host{display:block;border-left:1px solid #c9cbc9;border-right:1px solid #c9cbc9;padding:14px 15px 0 17px}
.head{display:flex;align-items:center;font-size:14px;line-height:20px;padding-left:3px}
.head>button{gap:6px}.acts{margin-left:auto;display:flex;gap:14px;padding-right:7px}
.kind{width:110px;height:28px;margin:16px 0 0 1px;background:#fff;border-radius:5px;box-shadow:0 0 0 2px #d8dad9;justify-content:center;gap:8px;font-weight:500}
nav{display:flex;gap:16px;margin-top:18px}
nav a{padding:1px 0 3px;border-bottom:2px solid transparent}nav .on{color:#c3500f;font-weight:700;border-color:#c3500f}
h3,legend{font-size:12px;line-height:16px;margin:0;padding:0;font-weight:700}
h3{display:flex;gap:4px;margin-top:18px;align-items:center}
.in{padding-left:11px}
fieldset{border:0;margin:25px 0 0;padding:0}
fieldset label{display:flex;align-items:center;gap:4px;padding-left:6px;margin-top:16px}
input[type=radio]{appearance:none;width:14px;height:14px;border:1px solid #888;border-radius:50%}
input[type=radio]:checked{border-color:#0d6ef2;background:radial-gradient(#0d6ef2 3px,transparent 4px)}
percent-field{margin-top:24px}percent-field+percent-field{margin-top:20px}`,
  () => `<div class="head"><button>对象属性${icon('caret')}</button><span class="acts"><button aria-label="固定">${icon('pin', 14)}</button><button aria-label="关闭">${icon('close')}</button></span></div>
<button class="kind">系列选项${icon('chevron', 10)}</button>
<nav><a href="#">填充与线条</a><a href="#">效果</a><a href="#" class="on">系列</a></nav>
<h3>${icon('fold')}系列选项</h3>
<div class="in"><fieldset><legend>系列绘制在</legend><label><input type="radio" name="axis" checked>主坐标轴(P)</label><label><input type="radio" name="axis">次坐标轴(S)</label></fieldset>
<percent-field value="0" min="-100" max="100">系列重叠(O)</percent-field>
<percent-field value="86" min="0" max="500">分类间距(G)</percent-field></div>`);

define('side-rail', `:host{display:flex;flex-direction:column;align-items:center;gap:8px;padding:16px 1px 0 0;position:relative}
button{width:32px;height:32px;border-radius:5px;justify-content:center}
.hide{height:16px;color:#888}.on{background:#cacccc}
.meter{position:absolute;right:3px;top:594px;width:7px;height:58px;border-radius:4px;background:linear-gradient(#9a9a96 19px,#18a85a 19px,#25cc6c 22px,#2fd070 46px,#7df07f);box-shadow:0 0 0 1px #fff8,0 2px 6px #0004}`,
  () => `<button class="hide" aria-label="收起">${icon('minus')}</button>` + ['sliders', 'star', 'copyshape', 'leaf', 'wand', 'booksearch', 'help', 'shirt', 'dots'].map((n, i) => `<button${i ? '' : ' class="on"'} aria-label="${n}">${icon(n)}</button>`).join('') + '<i class="meter"></i>');

/* ---------- status bar ---------- */
define('status-bar', `:host{display:flex;align-items:center;height:24px;border-top:1px solid #c3c6c5;padding:0 15px 1px 13px}
.l,.r,.r>span,.z{display:flex;align-items:center}.l{gap:10px;white-space:nowrap}.l button{gap:4px;padding-left:6px}
.r{margin-left:auto}button{gap:4px}v-sep{height:14px;background:#c9cac6}
.a{gap:14px}.a button+button{margin-left:6px}.v{gap:8px;padding:0 10px 0 8px}.v button{width:24px;height:24px;border-radius:4px;justify-content:center}
.v .on{background:#cecdc8}.play{background:#e4661a;width:20px;height:18px;border-radius:3px;justify-content:center}
.p{gap:8px;padding-right:12px}.z{gap:13px}.z .pct{gap:14px;padding:0 4px 0 10px}.z>:first-child{margin-left:12px}
input{appearance:none;width:110px;height:12px;background:linear-gradient(90deg,#2155e0 45%,#b9b9b6 45%) center/100% 2px no-repeat}
input::-webkit-slider-thumb{appearance:none;width:10px;height:10px;border-radius:50%;background:#fff;box-shadow:0 0 2px #0006}`,
  () => `<div class="l"><span>幻灯片 9 / 10</span><v-sep></v-sep><button>${icon('shirt')}1_Office 主题</button></div>
<div class="r"><span class="a"><button>${icon('smart')}智能美化${icon('caret')}</button><v-sep></v-sep><button>${icon('notes')}备注${icon('caret')}</button><button>${icon('comment')}批注</button><v-sep></v-sep></span>
<span class="v"><button class="on" aria-label="普通视图">${icon('normal')}</button><button aria-label="浏览">${icon('grid')}</button><button aria-label="阅读">${icon('book')}</button><v-sep></v-sep></span>
<span class="p"><button class="play" aria-label="放映">${icon('play')}</button><button aria-label="放映选项">${icon('caret')}</button></span><v-sep></v-sep>
<span class="z"><button aria-label="适应窗口">${icon('fit')}</button><button class="pct">98%${icon('caret')}</button><button aria-label="缩小">${icon('minus')}</button><input type="range" aria-label="缩放" min="0" max="100" value="45"><button aria-label="放大">${icon('plus')}</button></span></div>`);

define('site-mark', `:host{display:flex;align-items:center;gap:2px;opacity:.8;pointer-events:none}
div{display:flex;flex-direction:column}
b{font-size:21px;line-height:24px;color:#4a8ccb}
span{font:500 17px/18px Roboto,"Liberation Sans",sans-serif;color:#4cb868}`,
  () => `<svg width="42" height="40" viewBox="0 0 42 40"><defs><linearGradient id="a" x1="0" y1="1" x2="1" y2="0"><stop stop-color="#2f5fb4"/><stop offset="1" stop-color="#3fc0ee"/></linearGradient><linearGradient id="b" x1="0" y1="1" x2="1" y2="0"><stop stop-color="#f4e03a"/><stop offset=".5" stop-color="#6cc24a"/><stop offset="1" stop-color="#3cb06a"/></linearGradient></defs>
<path d="M42 0C22 1 1 12 .5 24c0 6 5 9 10 8C5 27 8 13 30 4z" fill="url(#a)"/><path d="M3 39c20 1 38-8 38-19 0-5-7-7-13-4 6 0 8 4 5 9-4 7-15 12-30 14z" fill="url(#b)"/><path d="M10 32c8 0 15-5 15-10 0-4-7-5-9-1 3-1 4 1 2 3-2 3-6 3-8 0-1-3 4-11 16-10C18 9 8 16 7 23c0 4 1 7 3 9z" fill="#4a86c8"/></svg>
<div><b>极光下载站</b><span>www.xz7.com</span></div>`);

define('wps-app', `:host{display:grid;grid-template-rows:40px 30px auto minmax(0,1fr) 24px;height:100vh;
background:radial-gradient(ellipse 340px 300px at 560px 100%,#efe9e6,#efe9e600),radial-gradient(ellipse 300px 260px at 100% 55%,#eee7e1,#eee7e100),radial-gradient(ellipse 500px 300px at 1480px 0,#e8e9e1,#e8e9e100),radial-gradient(ellipse 700px 420px at 1500px 100%,#e8e9e0,#e8e9e000),radial-gradient(ellipse 500px 400px at 0 500px,#e6e6e8,#e6e6e800),linear-gradient(90deg,#e0e5e8,#e6e8ea 25%,#e2e6ea 60%,#e4e7e6)}
main{display:grid;grid-template-columns:281px minmax(0,1fr) 262px 55px;margin-top:1px;min-height:0}
site-mark{position:absolute;right:11px;bottom:9px}`,
  () => `<title-bar></title-bar><menu-bar></menu-bar><rib-bon></rib-bon>
<main><slide-panel></slide-panel><work-space></work-space><prop-pane></prop-pane><side-rail></side-rail></main>
<status-bar></status-bar><site-mark></site-mark>`);
</script>
</body>
</html>
